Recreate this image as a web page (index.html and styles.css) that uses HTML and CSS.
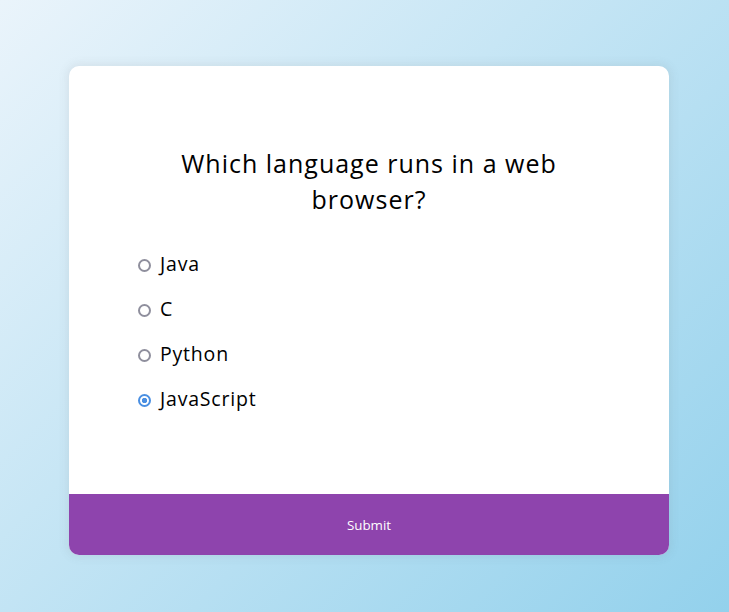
FILE: index.html
```html
<!DOCTYPE html>
<html lang="en">
<head>
<meta charset="utf-8">
<title>Quiz</title>
<link rel="stylesheet" href="styles.css">
</head>
<body>
<div class="quiz-container">
  <div class="quiz-header">
    <h2 class="question">Which language runs in a web browser?</h2>
    <ul class="answers">
      <li><input type="radio" name="answer" id="a"><label for="a">Java</label></li>
      <li><input type="radio" name="answer" id="b"><label for="b">C</label></li>
      <li><input type="radio" name="answer" id="c"><label for="c">Python</label></li>
      <li><input type="radio" name="answer" id="d" checked><label for="d">JavaScript</label></li>
    </ul>
  </div>
  <button class="submit">Submit</button>
</div>
</body>
</html>
```
FILE: styles.css
```css
html, body {
  margin: 0;
  height: 100%;
}
body {
  background: linear-gradient(135deg, #eaf4fb 0%, #93d1ec 100%);
  font-family: "Open Sans", "Noto Sans", sans-serif;
  overflow: hidden;
  padding: 66px 0 0 69px;
  box-sizing: border-box;
}
.quiz-container {
  background: #fff;
  border-radius: 10px;
  box-shadow: 0 0 10px 2px rgba(100, 100, 100, 0.1);
  width: 600px;
  overflow: hidden;
}
.quiz-header {
  padding: 64px;
}
.question {
  margin: 0;
  padding: 15px 16px 17px;
  text-align: center;
  font-size: 25px;
  letter-spacing: 1px;
  line-height: 36px;
  font-weight: 500;
  color: #000;
}
.answers {
  list-style: none;
  padding: 0;
  margin: 16px 0;
}
.answers li {
  font-size: 19.5px;
  letter-spacing: 0.8px;
  line-height: 29px;
  margin: 16px 0;
  display: flex;
  align-items: center;
}
.answers input {
  appearance: none;
  -webkit-appearance: none;
  box-sizing: border-box;
  width: 13px;
  height: 13px;
  margin: 1px 9px 0 5px;
  border: 2px solid #8f8f9d;
  border-radius: 50%;
  background: #fff;
  flex: none;
}
.answers input:checked {
  border-color: #4a8fe2;
  background: radial-gradient(circle, #4a8fe2 0 2.4px, #fff 3px);
}
.answers label {
  cursor: pointer;
  color: #000;
  line-height: 27px;
  padding-bottom: 2px;
}
.submit {
  display: block;
  width: 100%;
  border: none;
  background: #8e44ad;
  color: #fff;
  font-family: "Open Sans", sans-serif;
  font-size: 13.33px;
  line-height: 19px;
  padding: 22px 21px 20px;
  cursor: pointer;
}
```
